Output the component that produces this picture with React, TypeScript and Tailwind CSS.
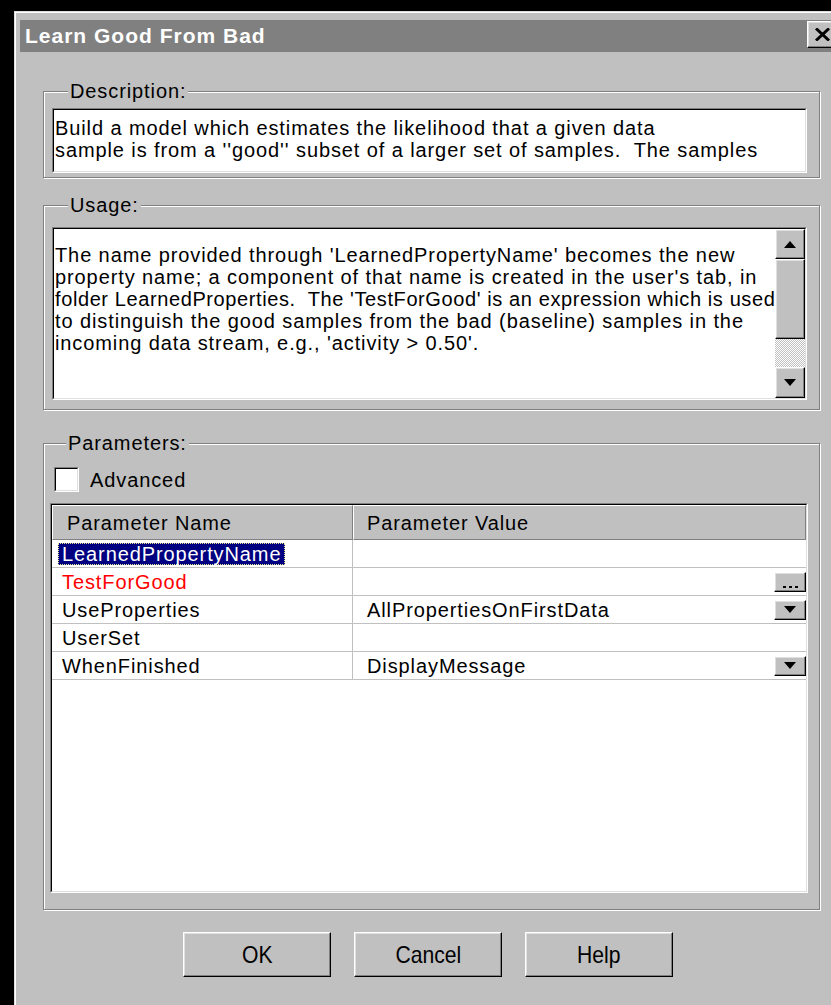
import type { ReactNode } from 'react';

const face = "font-['Liberation_Sans',Arial,sans-serif]";

function Raised({ className = '', children }: { className?: string; children?: ReactNode }) {
  return (
    <div className={`border border-t-white border-l-white border-r-black border-b-black bg-[#c0c0c0] shadow-[inset_-1px_-1px_0_#808080,inset_1px_1px_0_#dfdfdf] ${className}`}>
      {children}
    </div>
  );
}

function Sunken({ className = '', inner = '', children }: { className?: string; inner?: string; children?: ReactNode }) {
  return (
    <div className={`border border-t-[#808080] border-l-[#808080] border-r-white border-b-white ${className}`}>
      <div className={`h-full border border-t-black border-l-black border-r-[#dfdfdf] border-b-[#dfdfdf] bg-white ${inner}`}>
        {children}
      </div>
    </div>
  );
}

function Group({ label, className = '', children }: { label: string; className?: string; children?: ReactNode }) {
  return (
    <div className={`ml-[23px] w-[777px] border border-[#808080] shadow-[inset_1px_1px_0_#fff,1px_1px_0_#fff] ${className}`}>
      <div className="-mt-[12px] ml-[16px] w-fit bg-[#c0c0c0] px-[2px] leading-[22px]">{label}</div>
      {children}
    </div>
  );
}

function Arrow({ up = false }: { up?: boolean }) {
  return (
    <svg width="12" height="7" viewBox="0 0 12 7">
      <path d={up ? 'M6 0 L12 7 L0 7 Z' : 'M0 0 L12 0 L6 7 Z'} fill="#000" />
    </svg>
  );
}

// the third line is set a little tighter so it stays clear of the scrollbar
const usageLines = [
  { text: "The name provided through 'LearnedPropertyName' becomes the new", cls: '' },
  { text: "property name; a component of that name is created in the user's tab, in", cls: '' },
  { text: "folder LearnedProperties.  The 'TestForGood' is an expression which is used", cls: 'tracking-[0.6px]' },
  { text: 'to distinguish the good samples from the bad (baseline) samples in the', cls: '' },
  { text: "incoming data stream, e.g., 'activity > 0.50'.", cls: '' },
];

type Param = { name: string; value?: string; red?: boolean; selected?: boolean; control?: 'dots' | 'drop' };

const params: Param[] = [
  { name: 'LearnedPropertyName', selected: true },
  { name: 'TestForGood', red: true, control: 'dots' },
  { name: 'UseProperties', value: 'AllPropertiesOnFirstData', control: 'drop' },
  { name: 'UserSet' },
  { name: 'WhenFinished', value: 'DisplayMessage', control: 'drop' },
];

function ParamRow({ p }: { p: Param }) {
  return (
    <div className="flex h-[28px] border-b border-[#c0c0c0]">
      <div className={`flex w-[301px] items-center border-r border-[#c0c0c0] ${p.selected ? 'pl-[6px]' : 'pl-[10px]'}`}>
        {p.selected ? (
          <span className="border border-dotted border-[#e8e890] bg-[#000080] px-[3px] leading-[20px] text-white">{p.name}</span>
        ) : (
          <span className={`leading-[22px] ${p.red ? 'text-[#ff0000]' : 'text-black'}`}>{p.name}</span>
        )}
      </div>
      <div className="flex flex-1 items-center justify-between pl-[14px]">
        <span className="leading-[22px]">{p.value ?? ''}</span>
        {p.control === 'dots' && (
          <Raised className="flex h-[20px] w-[32px] items-end justify-center gap-[3px] pb-[3px]">
            <span className="h-[2px] w-[3px] bg-black" />
            <span className="h-[2px] w-[3px] bg-black" />
            <span className="h-[2px] w-[3px] bg-black" />
          </Raised>
        )}
        {p.control === 'drop' && (
          <Raised className="flex h-[20px] w-[32px] items-center justify-center">
            <Arrow />
          </Raised>
        )}
      </div>
    </div>
  );
}

export default function App() {
  return (
    <div className={`h-[1005px] w-[831px] overflow-hidden bg-black pl-[14px] pt-[11px] text-[20px] tracking-[0.9px] text-black ${face}`}>
      <div className="h-[1100px] w-[850px] border-l border-t border-[#dfdfdf] bg-[#c0c0c0] pl-[5px] pr-[4px] pt-[8px] shadow-[inset_1px_1px_0_#fff]">
        {/* title bar */}
        <div className="flex h-[32px] items-start justify-between bg-[#808080] pl-[5px]">
          <span className="mt-[4px] text-[21px] font-bold leading-[24px] tracking-[1px] text-white">Learn Good From Bad</span>
          <Raised className="mr-[15px] mt-[1px] flex h-[27px] w-[38px] items-center justify-start pl-[7px]">
            <svg width="15" height="13" viewBox="0 0 15 13">
              <path d="M1 0.5 L14 12.5 M14 0.5 L1 12.5" stroke="#000" strokeWidth="3" />
            </svg>
          </Raised>
        </div>

        <Group label="Description:" className="mt-[39px] pb-[4px] pl-[8px] pr-[12px]">
          <Sunken className="mt-[6px] h-[65px]" inner="overflow-hidden pl-[1px] pt-[7px]">
            <div className="whitespace-pre leading-[22px]">Build a model which estimates the likelihood that a given data</div>
            <div className="whitespace-pre leading-[22px]">sample is from a ''good'' subset of a larger set of samples.  The samples</div>
          </Sunken>
        </Group>

        <Group label="Usage:" className="mt-[27px] pb-[9px] pl-[8px] pr-[12px]">
          <Sunken className="mt-[11px] h-[173px]" inner="flex">
            <div className="flex-1 overflow-hidden pl-[1px] pt-[15px]">
              {usageLines.map((l) => (
                <div key={l.text} className={`whitespace-pre leading-[22px] ${l.cls}`}>{l.text}</div>
              ))}
            </div>
            <div className="flex w-[30px] flex-col">
              <Raised className="flex h-[30px] items-center justify-center">
                <Arrow up />
              </Raised>
              <Raised className="h-[80px]" />
              <div className="flex-1 bg-[repeating-conic-gradient(#c0c0c0_0_25%,#fff_0_50%)] bg-[length:2px_2px]" />
              <Raised className="flex h-[31px] items-center justify-center">
                <Arrow />
              </Raised>
            </div>
          </Sunken>
        </Group>

        <Group label="Parameters:" className="mt-[33px] pb-[16px] pl-[6px] pr-[11px]">
          <div className="mt-[13px] flex items-center pl-[4px]">
            <Sunken className="h-[25px] w-[25px]" />
            <span className="ml-[11px] leading-[22px]">Advanced</span>
          </div>
          <Sunken className="mt-[11px] h-[390px]">
            <div className="flex h-[35px] bg-[#c0c0c0]">
              <div className="flex w-[301px] items-center border border-t-white border-l-white border-r-[#808080] border-b-[#808080] pl-[14px] leading-[22px]">
                Parameter Name
              </div>
              <div className="flex flex-1 items-center border border-t-white border-l-white border-r-[#808080] border-b-[#808080] pl-[13px] leading-[22px]">
                Parameter Value
              </div>
            </div>
            {params.map((p) => (
              <ParamRow key={p.name} p={p} />
            ))}
          </Sunken>
        </Group>

        <div className="ml-[163px] mt-[22px] flex gap-[23px]">
          {['OK', 'Cancel', 'Help'].map((t) => (
            <Raised key={t} className="flex h-[45px] w-[148px] items-center justify-center">
              <span className="inline-block scale-x-[0.88] text-[24px] leading-[26px] tracking-normal">{t}</span>
            </Raised>
          ))}
        </div>
      </div>
    </div>
  );
}
